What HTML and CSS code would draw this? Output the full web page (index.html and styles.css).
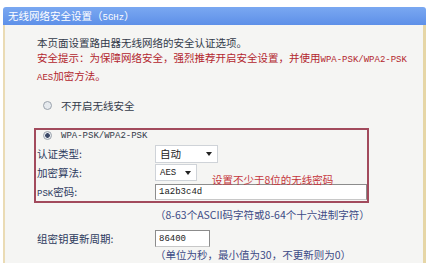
FILE: index.html
```html
<!DOCTYPE html>
<html lang="zh-CN">
<head>
    <meta charset="UTF-8">
    <meta name="viewport" content="width=device-width, initial-scale=1.0">
    <title>无线网络安全设置</title>
    <link rel="stylesheet" href="styles.css">
</head>
<body>
    <div class="panel">
        <div class="panel-head">无线网络安全设置（<span class="asc">5GHz</span>）</div>

        <div class="panel-body">
            <!-- Intro -->
            <p class="intro">本页面设置路由器无线网络的安全认证选项。</p>
            <p class="warn">安全提示：为保障网络安全，强烈推荐开启安全设置，并使用<span class="asc">WPA-PSK/WPA2-PSK</span><br><span class="asc">AES</span>加密方法。</p>

            <div class="radio-row"><span class="radio"></span>不开启无线安全</div>

            <!-- WPA-PSK section -->
            <div class="wpa-box">
                <div class="radio-row top"><span class="radio on"></span><span class="asc">WPA-PSK/WPA2-PSK</span></div>

                <div class="field">
                    <label>认证类型:</label>
                    <span class="select wide">自动<i class="arrow"></i></span>
                </div>
                <div class="field">
                    <label>加密算法:</label>
                    <span class="select narrow"><span class="asc">AES</span><i class="arrow"></i></span>
                </div>
                <div class="field">
                    <label><span class="asc">PSK</span>密码:</label>
                    <input type="text" class="text-input psk" value="1a2b3c4d">
                </div>

                <span class="hint">设置不少于8位的无线密码</span>
            </div>

            <p class="note">（8-63个ASCII码字符或8-64个十六进制字符）</p>

            <div class="field gk">
                <label>组密钥更新周期:</label>
                <input type="text" class="text-input period" value="86400">
            </div>
            <p class="note">（单位为秒，最小值为30，不更新则为0）</p>
        </div>
    </div>
</body>
</html>
```

FILE: styles.css
```css
body {
    margin: 0;
    background: #ffffff;
    font-family: "Noto Sans CJK SC", "Noto Sans", sans-serif;
    font-size: 10.5px;
    color: #333a4a;
}

.asc {
    font-family: "Liberation Mono", monospace;
    font-size: 9px;
}

.panel {
    width: 423px;
    margin: 7px 0 0 3px;
}

.panel-head {
    height: 18px;
    line-height: 18px;
    padding-left: 5px;
    color: #ffffff;
    background: linear-gradient(#7aa8f1, #5e90e8);
    border-radius: 3px 3px 0 0;
}

.panel-body {
    height: 238px;
    box-sizing: border-box;
    padding: 10px 0 0 32px;
    background: #f5f5f3;
    border-left: 2px solid #eadbb4;
    border-right: 3px solid #e6d6a6;
}

p {
    margin: 0;
    line-height: 15px;
}

.warn {
    color: #b3262e;
}

.radio-row {
    display: flex;
    align-items: center;
    height: 15px;
    margin-top: 12px;
    padding-left: 6px;
}

.radio-row.top {
    height: 11px;
    margin-top: 0;
}

.radio {
    width: 7px;
    height: 7px;
    border-radius: 50%;
    border: 1px solid #9aa2ac;
    background: #e6eaee;
    margin-right: 9px;
}

.radio.on {
    background: radial-gradient(circle, #3a4866 0 2px, #e6eaee 2.6px);
}

.wpa-box {
    position: relative;
    width: 335px;
    box-sizing: border-box;
    margin: 15px 0 0 -3px;
    padding-left: 1px;
    border: 2px solid #a24a5c;
}

.field {
    display: flex;
    align-items: center;
    height: 19px;
    color: #2d3a5e;
}

.wpa-box .radio-row + .field {
    margin-top: 3px;
}

.field label {
    width: 118px;
}

.select {
    display: flex;
    align-items: center;
    box-sizing: border-box;
    padding-left: 4px;
    background: #ffffff;
    border: 1px solid #cfd3d8;
    color: #222;
}

.select.wide {
    width: 63px;
    height: 18px;
}

.select.narrow {
    width: 42px;
    height: 17px;
}

.arrow {
    margin-left: auto;
    margin-right: 5px;
    border-left: 3px solid transparent;
    border-right: 3px solid transparent;
    border-top: 4px solid #222;
}

.text-input {
    box-sizing: border-box;
    margin: 0;
    padding: 0 3px;
    background: #ffffff;
    border: 1px solid #8c8c8c;
    border-bottom-color: #c8c8c8;
    font-family: "Liberation Mono", monospace;
    font-size: 9px;
    color: #222;
}

.text-input.psk {
    width: 212px;
    height: 16px;
}

.text-input.period {
    width: 55px;
    height: 17px;
}

/* annotation drawn over the form */
.hint {
    position: absolute;
    top: 42px;
    left: 176px;
    line-height: 15px;
    color: #c5343a;
}

.note {
    margin-top: 4px;
    padding-left: 118px;
    color: #3d4b86;
}

.field.gk {
    height: 17px;
    margin-top: 8px;
}

.field.gk + .note {
    margin-top: 0;
}
```
